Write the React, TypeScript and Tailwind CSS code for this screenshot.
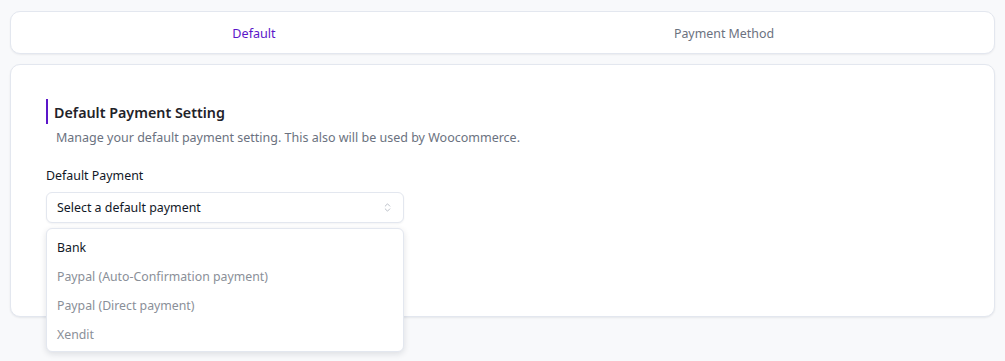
import { ChevronsUpDown } from 'lucide-react';

const options = [
    { label: 'Bank', active: true },
    { label: 'Paypal (Auto-Confirmation payment)', active: false },
    { label: 'Paypal (Direct payment)', active: false },
    { label: 'Xendit', active: false },
];

export default function App() {
    return (
        <div className="min-h-[361px] bg-[#f8f9fb] px-[10px] pt-[11px] text-[12.4px] text-[#1f2329]" style={{ fontFamily: '"Noto Sans", "Open Sans", sans-serif' }}>
            {/* Tabs */}
            <div className="h-[43px] rounded-[10px] border border-[#e3e7ef] bg-white shadow-[0_1px_2px_rgba(15,23,42,0.06)] flex items-center">
                <div className="flex w-full pl-[8px] pt-[3px]">
                    <button className="w-[470px] text-center text-[12.6px] text-[#5b16c9]">Default</button>
                    <button className="w-[470px] text-center text-[12.4px] text-[#6b7280]">Payment Method</button>
                </div>
            </div>

            {/* Settings card */}
            <div className="relative mt-[10px] h-[253px] rounded-[10px] border border-[#e3e7ef] bg-white shadow-[0_1px_2px_rgba(15,23,42,0.08)] px-[35px] pt-[34px]">
                <div className="border-l-2 border-[#5b16c9] pl-[6px] h-[25px] flex items-center pt-[3px]">
                    <h2 className="text-[14.3px] font-semibold text-[#1f2329]">Default Payment Setting</h2>
                </div>
                <p className="mt-[5px] pl-[10px] text-[12.5px] text-[#6b7280]">Manage your default payment setting. This also will be used by Woocommerce.</p>

                <label className="block mt-[19px] text-[12.4px] text-[#111827]">Default Payment</label>
                <div className="relative w-[358px] mt-[7px]">
                    <button className="w-full h-[31px] flex items-center justify-between rounded-[6px] border border-[#e3e7ef] bg-white px-[10px] text-[12.4px] text-[#111827] shadow-[0_1px_2px_rgba(15,23,42,0.05)]">
                        <span>Select a default payment</span>
                        <ChevronsUpDown className="h-[11px] w-[11px] text-[#9ca3af]" strokeWidth={1.5} />
                    </button>

                    {/* Open menu */}
                    <div className="absolute left-0 top-[36px] z-10 w-full rounded-[6px] border border-[#e3e7ef] bg-white pt-[5px] pb-[2px] shadow-[0_2px_6px_rgba(15,23,42,0.12)]">
                        {options.map(o => (
                            <div
                                key={o.label}
                                className={`h-[28.7px] flex items-center px-[10px] text-[12.3px] ${o.active ? 'text-[#111827]' : 'text-[#8a8f98]'}`}
                            >
                                {o.label}
                            </div>
                        ))}
                    </div>
                </div>
            </div>
        </div>
    );
}
